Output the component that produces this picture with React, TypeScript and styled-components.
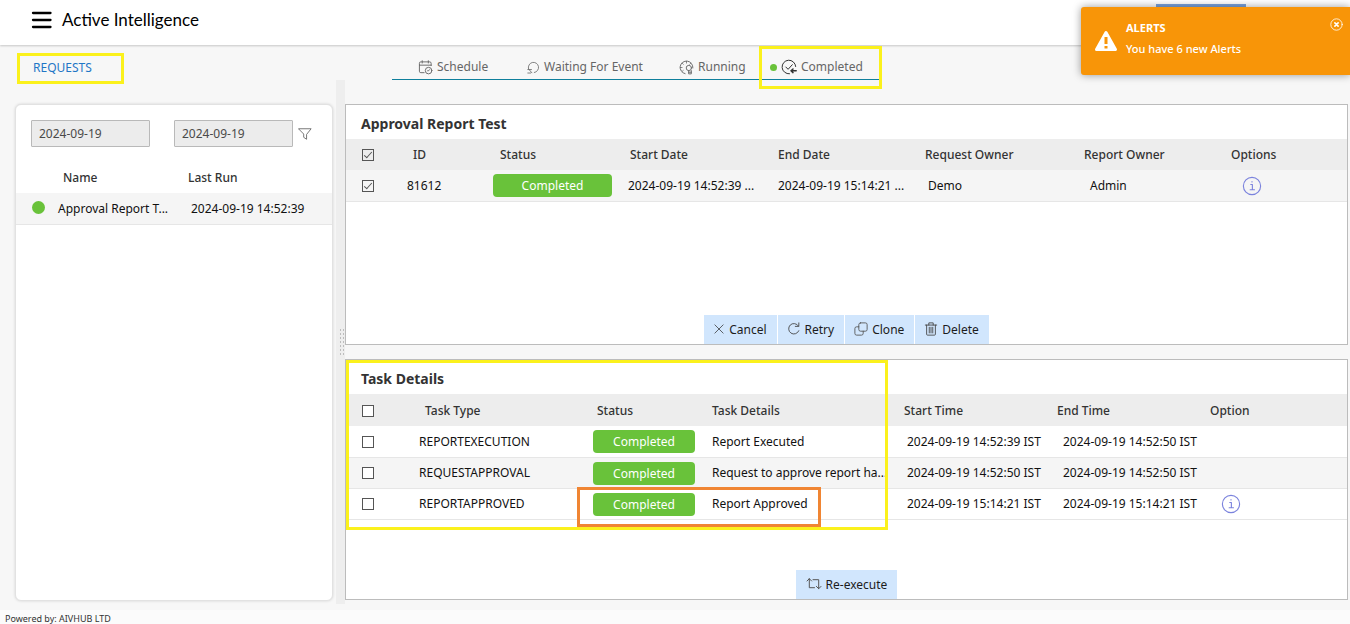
import React from "react";
import styled, { createGlobalStyle } from "styled-components";

const GlobalStyle = createGlobalStyle`
  *, *::before, *::after { box-sizing: border-box; }
  body {
    margin: 0;
    background: #f7f7f7;
    color: #1c1c1c;
    font: 12px/16px "Noto Sans", "Open Sans", sans-serif;
  }
  button, input { font: inherit; color: inherit; }
`;

const Page = styled.div`
  position: relative;
  display: flex;
  flex-direction: column;
  min-height: 100vh;
  overflow: hidden;
`;

const Header = styled.header`
  display: flex;
  align-items: center;
  gap: 10px;
  height: 45px;
  padding: 0 31px 5px;
  background: #fff;
  box-shadow: 0 1px 2px rgba(0, 0, 0, 0.2);
`;

const MenuButton = styled.button`
  display: flex;
  padding: 0;
  border: 0;
  background: none;
`;

const Brand = styled.h1`
  margin: 0;
  color: #000;
  font: 400 17px/24px Lato, "Noto Sans", sans-serif;
`;

const HeaderBar = styled.div`
  position: absolute;
  top: 4px;
  right: 104px;
  width: 90px;
  height: 6px;
  background: #7aa3dc;
`;

const Main = styled.main`
  display: flex;
  flex: 1;
  padding-right: 2px;
`;

const Sidebar = styled.aside`
  display: flex;
  flex-direction: column;
  width: 336px;
  padding: 8px 3px 9px 15px;
`;

const RequestsLink = styled.a`
  position: relative;
  align-self: flex-start;
  margin-left: 2px;
  padding: 7px 32px 8px 16px;
  color: #1f76c6;
  text-decoration: none;
`;

const Mark = styled.span<{ $color?: string }>`
  position: absolute;
  inset: 0;
  border: 3px solid ${(p) => p.$color ?? "#fbf11c"};
  pointer-events: none;
`;

const TabMark = styled(Mark)`
  inset: -7px -2px -10px;
`;

const TaskMark = styled(Mark)`
  inset: 0 auto auto 0;
  width: 542px;
  height: 170px;
`;

const ApprovedMark = styled(Mark)`
  inset: 127px auto auto 231px;
  width: 244px;
  height: 40px;
`;

const SideCard = styled.section`
  flex: 1;
  margin-top: 20px;
  border: 1px solid #e2e2e2;
  border-radius: 6px;
  background: #fff;
  box-shadow: 0 0 3px rgba(0, 0, 0, 0.15);
`;

const Filters = styled.form`
  display: flex;
  align-items: center;
  padding: 15px;
`;

const DateInput = styled.input`
  width: 119px;
  height: 27px;
  margin-right: 24px;
  padding: 0 7px;
  border: 1px solid #b9b9b9;
  border-radius: 1px;
  background: #ececec;
  color: #4a4a4a;

  & + & {
    margin-right: 5px;
  }
`;

const IconButton = styled.button`
  display: inline-flex;
  padding: 0;
  border: 0;
  background: none;
  vertical-align: middle;
`;

const Table = styled.table`
  width: 100%;
  table-layout: fixed;
  border-collapse: collapse;
`;

const Th = styled.th<{ $pad?: number }>`
  height: 31px;
  padding: 0 0 0 ${(p) => p.$pad ?? 0}px;
  color: #333;
  font-weight: 500;
  text-align: left;
  white-space: nowrap;
`;

const Td = styled.td<{ $pad?: number }>`
  height: 31px;
  padding: 1px 0 0 ${(p) => p.$pad ?? 0}px;
  border-bottom: 1px solid #e6e6e6;
  color: #111;
  text-align: left;
  white-space: nowrap;
`;

const HeadRow = styled.tr<{ $plain?: boolean }>`
  background: ${(p) => (p.$plain ? "#fff" : "#ededed")};
`;

const Row = styled.tr<{ $shaded?: boolean }>`
  background: ${(p) => (p.$shaded ? "#f5f5f5" : "#fff")};
`;

const Dot = styled.span<{ $size: number }>`
  display: inline-block;
  width: ${(p) => p.$size}px;
  height: ${(p) => p.$size}px;
  border-radius: 50%;
  background: #69c23a;
  vertical-align: -1px;
`;

const Splitter = styled.div`
  display: flex;
  align-items: center;
  justify-content: flex-end;
  width: 9px;
  margin: 35px 0 6px;
  background: #eee;
`;

const Grip = styled.span`
  width: 6px;
  height: 28px;
  background: radial-gradient(circle, #bdbdbd 1px, transparent 1px) 0 0 / 3px 4px;
`;

const Content = styled.div`
  display: flex;
  flex: 1;
  flex-direction: column;
  min-width: 0;
  padding-bottom: 10px;
`;

const Tabs = styled.nav`
  display: flex;
  align-self: flex-start;
  height: 27px;
  margin: 8px 0 24px 47px;
  border-bottom: 1px solid #0f7f9c;
`;

const Tab = styled.button<{ $width: number; $pad: number }>`
  position: relative;
  display: flex;
  align-items: center;
  gap: 4px;
  width: ${(p) => p.$width}px;
  padding: 2px 0 0 ${(p) => p.$pad}px;
  border: 0;
  background: none;
  color: #666;
  white-space: nowrap;
`;

const Panel = styled.section`
  position: relative;
  display: flex;
  flex: 1;
  flex-direction: column;
  border: 1px solid #bcbcbc;
  background: #fff;

  & + & {
    margin-top: 14px;
  }
`;

const PanelTitle = styled.h2`
  margin: 0;
  padding: 11px 15px 7px;
  color: #333;
  font-size: 14px;
  font-weight: 700;
  line-height: 16px;
`;

const TaskPanel = styled(Panel)`
  ${Th} {
    height: 32px;
    padding-top: 2px;
  }
`;

const Badge = styled.span<{ $width: number }>`
  display: block;
  width: ${(p) => p.$width}px;
  padding-top: 1px;
  border-radius: 4px;
  background: #69c23a;
  color: #fff;
  line-height: 22px;
  text-align: center;
`;

const Checkbox = styled.input`
  display: block;
  appearance: none;
  width: 12px;
  height: 12px;
  margin: 0;
  border: 1px solid #555;
  background: #fff;

  &:checked {
    background: transparent;
  }

  &:checked::after {
    content: "";
    display: block;
    width: 8px;
    height: 4px;
    margin: 2px 0 0 1px;
    border: solid #555;
    border-width: 0 0 1px 1px;
    transform: rotate(-48deg);
  }
`;

const Actions = styled.div`
  display: flex;
  justify-content: center;
  gap: 1px;
  margin-top: auto;
`;

const ActionButton = styled.button`
  display: flex;
  align-items: center;
  gap: 4px;
  height: 29px;
  padding: 0 10px 0 9px;
  border: 0;
  background: #d1e6fd;

  svg {
    margin-bottom: 2px;
  }
`;

const WideActionButton = styled(ActionButton)`
  padding: 0 10px;
`;

const Toast = styled.div`
  position: absolute;
  top: 7px;
  right: 0;
  display: flex;
  width: 269px;
  height: 68px;
  padding: 13px 7px 0 13px;
  border-radius: 3px 0 0 3px;
  background: #f89508;
  box-shadow: 0 0 8px rgba(0, 0, 0, 0.4);
  color: #fff;
`;

const ToastText = styled.p`
  flex: 1;
  margin: -3px 0 0 8px;
  font-size: 11px;
  font-weight: 500;
  line-height: 21px;
`;

const ToastClose = styled(IconButton)`
  align-self: flex-start;
  margin-top: -2px;
`;

const Footer = styled.footer`
  padding: 3px 5px 0;
  background: #fbfbfb;
  color: #333;
  font-size: 9px;
  line-height: 11px;
`;

type IconProps = { size?: number; color?: string; children: React.ReactNode; width?: number };
const Icon = ({ size = 16, width = 1, color = "#666", children }: IconProps) => (
  <svg
    width={size}
    height={size}
    viewBox="0 0 16 16"
    fill="none"
    stroke={color}
    strokeWidth={width}
    strokeLinecap="round"
    strokeLinejoin="round"
    aria-hidden="true"
  >
    {children}
  </svg>
);

const ScheduleIcon = () => (
  <Icon size={15}>
    <path d="M6.500 13.500H3a1.500 1.500 0 0 1-1.500-1.500V3.500A1.500 1.500 0 0 1 3 2h9.500A1.500 1.500 0 0 1 14 3.500V6M1.500 5.500H14M4.500 .8v2.400M11 .8v2.400" />
    <circle cx="11.300" cy="11.300" r="3.500" />
    <path d="M12.300 10.300l-1 1.200h-1" />
  </Icon>
);

const WaitingIcon = () => (
  <Icon size={13}>
    <path d="M1.800 9.500A6.300 6.300 0 1 1 9 14.200" />
    <path d="M1 10.500h4.500M2.500 10.500l3.500 4M1 14.800h3.500" />
  </Icon>
);

const RunningIcon = () => (
  <Icon size={15}>
    <path d="M6.500 14.600A6.800 6.800 0 1 1 14.800 8.500" />
    <path d="M8 1.300v2M1.300 8h2M3.300 3.300l1.300 1.300M12.700 3.300l-1.300 1.300M3.300 12.300l1.300-1.200" strokeWidth="0.8" />
    <circle cx="10.500" cy="8.500" r="2.800" />
    <path d="M10.300 11.300v3.500h2.800v-3.500M10.300 13h2.800" />
  </Icon>
);

const CompletedIcon = () => (
  <Icon color="#333">
    <path d="M14.700 7.500A6.800 6.800 0 1 0 8.500 14.800M4.800 8l2.300 2.300 4.200-4.600" />
    <path d="M15.200 11.800H10.500M12 10l-2 1.800 2 1.800" strokeWidth="1.500" />
  </Icon>
);

const InfoIcon = () => (
  <Icon size={20} color="#7b83dd" width={0.9}>
    <circle cx="8" cy="8" r="6.900" />
    <path d="M7 6.800h1.300v4.200M6.500 11h3.500M8 4.500v.3" />
  </Icon>
);

const CheckCell = ({ label, checked = false }: { label: string; checked?: boolean }) => (
  <Checkbox type="checkbox" defaultChecked={checked} aria-label={label} />
);

const Columns = ({ widths }: { widths: number[] }) => (
  <colgroup>
    {widths.map((w, i) => (
      <col key={i} width={w} />
    ))}
    <col />
  </colgroup>
);

const tasks = [
  { type: "REPORTEXECUTION", details: "Report Executed", start: "2024-09-19 14:52:39 IST", end: "2024-09-19 14:52:50 IST", info: false },
  { type: "REQUESTAPPROVAL", details: "Request to approve report ha...", start: "2024-09-19 14:52:50 IST", end: "2024-09-19 14:52:50 IST", info: false },
  { type: "REPORTAPPROVED", details: "Report Approved", start: "2024-09-19 15:14:21 IST", end: "2024-09-19 15:14:21 IST", info: true },
];

export default function App() {
  return (
    <Page>
      <GlobalStyle />
      <Header>
        <MenuButton aria-label="Menu">
          <svg width="21" height="18" viewBox="0 0 21 18" stroke="#000" strokeWidth="2.300" strokeLinecap="round" aria-hidden="true">
            <path d="M2 2h17.500M2 9h17.500M2 16h17.500" />
          </svg>
        </MenuButton>
        <Brand>Active Intelligence</Brand>
      </Header>
      <HeaderBar />

      <Main>
        <Sidebar>
          <RequestsLink href="#requests">
            REQUESTS
            <Mark />
          </RequestsLink>
          <SideCard>
            <Filters>
              <DateInput aria-label="From date" defaultValue="2024-09-19" />
              <DateInput aria-label="To date" defaultValue="2024-09-19" />
              <IconButton type="button" aria-label="Filter">
                <Icon size={14}>
                  <path d="M1 2h14L9.800 8.500V14L6.500 11.800V8.500z" />
                </Icon>
              </IconButton>
            </Filters>
            <Table>
              <Columns widths={[42, 130]} />
              <thead>
                <HeadRow $plain>
                  <Th />
                  <Th $pad={5}>Name</Th>
                  <Th>Last Run</Th>
                </HeadRow>
              </thead>
              <tbody>
                <Row $shaded>
                  <Td $pad={16}>
                    <Dot $size={13} />
                  </Td>
                  <Td>Approval Report T...</Td>
                  <Td $pad={3}>2024-09-19 14:52:39</Td>
                </Row>
              </tbody>
            </Table>
          </SideCard>
        </Sidebar>

        <Splitter>
          <Grip />
        </Splitter>

        <Content>
          <Tabs>
            <Tab $width={109} $pad={26}>
              <ScheduleIcon />
              Schedule
            </Tab>
            <Tab $width={152} $pad={26}>
              <WaitingIcon />
              Waiting For Event
            </Tab>
            <Tab $width={108} $pad={26}>
              <RunningIcon />
              Running
            </Tab>
            <Tab $width={119} $pad={9}>
              <Dot $size={7} />
              <CompletedIcon />
              Completed
              <TabMark />
            </Tab>
          </Tabs>

          <Panel>
            <PanelTitle>Approval Report Test</PanelTitle>
            <Table>
              <Columns widths={[44, 103, 135, 150, 147, 159, 147]} />
              <thead>
                <HeadRow>
                  <Th $pad={16}>
                    <CheckCell label="Select all requests" checked />
                  </Th>
                  <Th $pad={23}>ID</Th>
                  <Th $pad={7}>Status</Th>
                  <Th $pad={2}>Start Date</Th>
                  <Th>End Date</Th>
                  <Th>Request Owner</Th>
                  <Th>Report Owner</Th>
                  <Th>Options</Th>
                </HeadRow>
              </thead>
              <tbody>
                <Row $shaded>
                  <Td $pad={16}>
                    <CheckCell label="Select 81612" checked />
                  </Td>
                  <Td $pad={17}>81612</Td>
                  <Td>
                    <Badge $width={119}>Completed</Badge>
                  </Td>
                  <Td>2024-09-19 14:52:39 ...</Td>
                  <Td>2024-09-19 15:14:21 ...</Td>
                  <Td $pad={3}>Demo</Td>
                  <Td $pad={6}>Admin</Td>
                  <Td $pad={11}>
                    <IconButton aria-label="Request information">
                      <InfoIcon />
                    </IconButton>
                  </Td>
                </Row>
              </tbody>
            </Table>
            <Actions>
              <ActionButton>
                <Icon size={12} color="#333">
                  <path d="M2.500 2.500l11 11M13.500 2.500l-11 11" />
                </Icon>
                Cancel
              </ActionButton>
              <ActionButton>
                <Icon size={14} color="#444">
                  <path d="M13.500 10A6 6 0 1 1 13 4.500M13.500 1v4H9.500" />
                </Icon>
                Retry
              </ActionButton>
              <ActionButton>
                <Icon size={14} color="#555">
                  <rect x="5.500" y="1" width="9.500" height="9.500" rx="2" />
                  <path d="M5.500 5.500H3a2 2 0 0 0-2 2V13a2 2 0 0 0 2 2h5.500a2 2 0 0 0 2-2v-2.500" />
                </Icon>
                Clone
              </ActionButton>
              <ActionButton>
                <Icon size={14} color="#444">
                  <path d="M1.500 3.500h13M5.500 3.500V1h5v2.500M3 3.500V14a1 1 0 0 0 1 1h8a1 1 0 0 0 1-1V3.500M6 6v6.500M8 6v6.500M10 6v6.500" />
                </Icon>
                Delete
              </ActionButton>
            </Actions>
          </Panel>

          <TaskPanel>
            <PanelTitle>Task Details</PanelTitle>
            <Table>
              <Columns widths={[44, 203, 119, 192, 153, 153]} />
              <thead>
                <HeadRow>
                  <Th $pad={16}>
                    <CheckCell label="Select all tasks" />
                  </Th>
                  <Th $pad={35}>Task Type</Th>
                  <Th $pad={4}>Status</Th>
                  <Th>Task Details</Th>
                  <Th>Start Time</Th>
                  <Th>End Time</Th>
                  <Th>Option</Th>
                </HeadRow>
              </thead>
              <tbody>
                {tasks.map((task, i) => (
                  <Row key={task.type} $shaded={i % 2 === 1}>
                    <Td $pad={16}>
                      <CheckCell label={`Select ${task.type}`} />
                    </Td>
                    <Td $pad={29}>{task.type}</Td>
                    <Td>
                      <Badge $width={102}>Completed</Badge>
                    </Td>
                    <Td>{task.details}</Td>
                    <Td $pad={3}>{task.start}</Td>
                    <Td $pad={6}>{task.end}</Td>
                    <Td $pad={11}>
                      {task.info && (
                        <IconButton aria-label="Task information">
                          <InfoIcon />
                        </IconButton>
                      )}
                    </Td>
                  </Row>
                ))}
              </tbody>
            </Table>
            <Actions>
              <WideActionButton>
                <Icon color="#555">
                  <path d="M1 5l2.300-2.300L5.600 5M3.300 2.700v9H8.500M7 3.700h5.700v9M10.400 10.400l2.300 2.300 2.300-2.300" />
                </Icon>
                Re-execute
              </WideActionButton>
            </Actions>
            <TaskMark />
            <ApprovedMark $color="#f08533" />
          </TaskPanel>
        </Content>
      </Main>

      <Footer>Powered by: AIVHUB LTD</Footer>

      <Toast role="alert">
        <svg width="24" height="40" viewBox="0 0 24 40" aria-hidden="true">
          <path d="M12 12.500L21.500 29.500h-19z" fill="#fff" stroke="#fff" strokeWidth="3" strokeLinejoin="round" />
          <path d="M12 17v7M12 26v2.500" stroke="#f89508" strokeWidth="3" />
        </svg>
        <ToastText>
          <strong>ALERTS</strong>
          <br />
          You have 6 new Alerts
        </ToastText>
        <ToastClose aria-label="Close alert">
          <Icon size={13} color="#fff">
            <circle cx="8" cy="8" r="7" />
            <path d="M6 6l4 4M10 6l-4 4" strokeWidth="2" />
          </Icon>
        </ToastClose>
      </Toast>
    </Page>
  );
}
